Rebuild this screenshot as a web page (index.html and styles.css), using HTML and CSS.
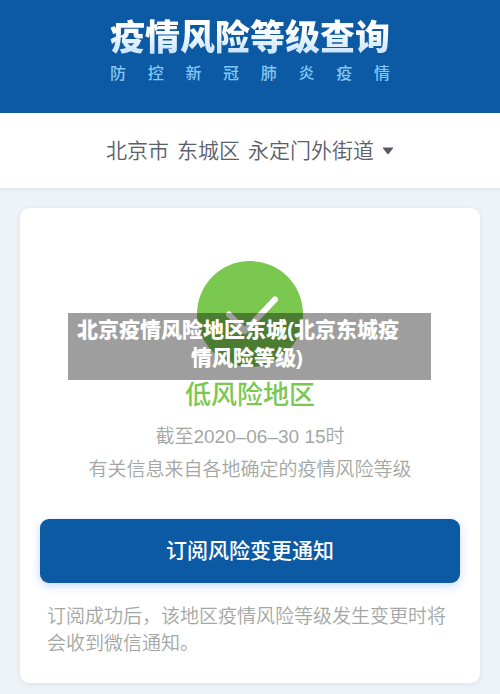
FILE: index.html
```html
<!DOCTYPE html>
<html lang="zh-CN">
<head>
<meta charset="utf-8">
<meta name="viewport" content="width=device-width, initial-scale=1">
<title>疫情风险等级查询</title>
<link rel="stylesheet" href="styles.css">
</head>
<body>
<header class="banner">
  <div class="banner-inner">
    <h1 class="banner-title">疫情风险等级查询</h1>
    <p class="banner-sub"><span>防</span><span>控</span><span>新</span><span>冠</span><span>肺</span><span>炎</span><span>疫</span><span>情</span></p>
  </div>
</header>
<button class="region" type="button">
  <span>北京市</span><span>东城区</span><span>永定门外街道</span>
  <svg class="caret" viewBox="0 0 12 8" aria-hidden="true"><path d="M1.5 0.5h9q1.2 0 .4 1L6.8 6.700q-.8.9-1.600 0L1.100 1.500q-.8-1 .4-1z"/></svg>
</button>
<main class="content">
  <section class="card">
    <div class="status">
      <svg class="status-icon" viewBox="0 0 106 106" aria-hidden="true">
        <circle cx="53" cy="53" r="53"/>
        <path d="M32 53.500L48 70L78 38.500"/>
      </svg>
      <p class="caption"><span class="caption-start">北京疫情风险地区东城(北京东城疫</span><span class="caption-end">情风险等级)</span></p>
    </div>
    <h2 class="level">低风险地区</h2>
    <p class="info">截至2020–06–30 15时</p>
    <p class="info">有关信息来自各地确定的疫情风险等级</p>
    <button class="subscribe" type="button">订阅风险变更通知</button>
    <p class="note">订阅成功后，该地区疫情风险等级发生变更时将会收到微信通知。</p>
  </section>
</main>
</body>
</html>
```
FILE: styles.css
```css
* {
  box-sizing: border-box;
}

body {
  margin: 0;
  background: #eef3f8;
  font-family: "Liberation Sans", "Noto Sans CJK SC", sans-serif;
}

h1, h2, p {
  margin: 0;
}

button {
  border: 0;
  font-family: inherit;
  cursor: pointer;
}

.banner {
  display: flex;
  justify-content: center;
  padding: 16px 20px 25px;
  background: #0c59a4;
}

.banner-title {
  font-size: 35px;
  line-height: 44px;
  font-weight: 900;
  background: linear-gradient(#ffffff 30%, #c5e2ff 90%);
  background-clip: text;
  -webkit-background-clip: text;
  color: transparent;
}

.banner-sub {
  display: flex;
  justify-content: space-between;
  font-size: 16px;
  line-height: 28px;
  font-weight: 500;
  color: #84c7f6;
}

.region {
  display: flex;
  width: 100%;
  align-items: center;
  justify-content: center;
  gap: 8px;
  padding: 20px 20px 19px;
  background: #fff;
  box-shadow: 0 1px 4px rgba(40, 60, 80, 0.12);
  color: #5c606a;
  font-size: 21px;
  line-height: 36px;
  font-weight: 350;
}

.caret {
  width: 12px;
  height: 8px;
  fill: #555b66;
}

.content {
  padding: 20px 20px 11px;
}

.card {
  padding: 53px 20px 26px;
  border-radius: 9px;
  background: #fff;
  box-shadow: 0 1px 5px rgba(40, 60, 80, 0.1);
  text-align: center;
}

.status {
  position: relative;
  padding-bottom: 3px;
}

.status-icon {
  display: block;
  width: 106px;
  height: 106px;
  margin: 0 auto;
}

.status-icon circle {
  fill: #7bc851;
}

.status-icon path {
  fill: none;
  stroke: #fff;
  stroke-width: 6;
  stroke-linecap: round;
  stroke-linejoin: round;
}

/* Translucent caption laid over the status icon */
.caption {
  position: absolute;
  top: 52px;
  left: 28px;
  right: 29px;
  display: flex;
  flex-direction: column;
  padding: 3px 14px 8px 9px;
  background: rgba(0, 0, 0, 0.38);
  color: #fff;
  font-size: 21px;
  line-height: 28px;
  font-weight: 900;
  text-align: left;
}

.caption-end {
  align-self: center;
}

.level {
  color: #7bc851;
  font-size: 26px;
  line-height: 50px;
  font-weight: 500;
}

.info {
  color: #a3a7a3;
  font-size: 19px;
  line-height: 33px;
  font-weight: 350;
}

.subscribe {
  display: block;
  width: 100%;
  margin-top: 33px;
  padding: 14px;
  border-radius: 9px;
  background: #0c59a4;
  box-shadow: 0 3px 10px rgba(40, 100, 255, 0.25);
  color: #fff;
  font-size: 21px;
  line-height: 36px;
  font-weight: 500;
}

.note {
  margin-top: 20px;
  padding: 0 7px;
  color: #a3a7a3;
  font-size: 19px;
  line-height: 27px;
  font-weight: 350;
  text-align: left;
}
```
